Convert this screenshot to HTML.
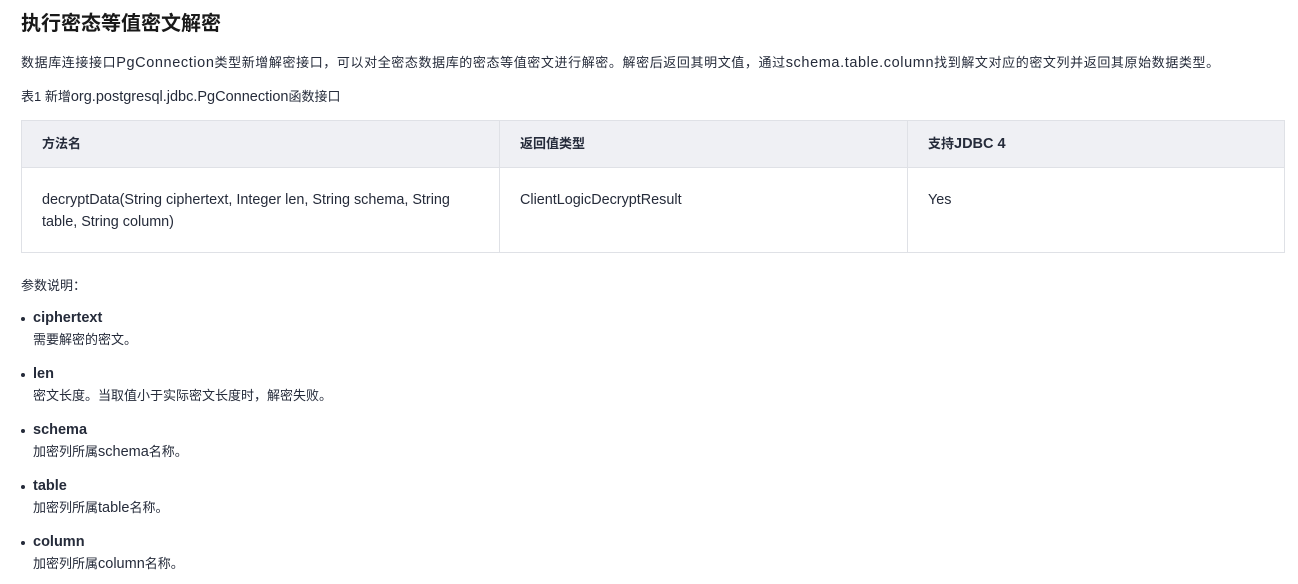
<!DOCTYPE html>
<html><head><meta charset="utf-8"><style>
body{margin:0;background:#fff;font-family:"Liberation Sans","Noto Sans CJK SC",sans-serif;color:#252b3a;font-size:13px;width:1298px;height:584px;overflow:hidden;position:relative}
.a{position:absolute;white-space:nowrap;line-height:22px}
.l{font-size:14.5px}
.p{letter-spacing:0.6px}
h1{position:absolute;left:21px;top:10px;margin:0;font-size:20px;line-height:28px;font-weight:bold;color:#191919}
table{position:absolute;left:21px;top:120px;border-collapse:collapse;width:1264px}
td,th{border:1px solid #dfe1e6;text-align:left;vertical-align:top;padding:0 20px;font-size:13px;line-height:22px}
th{background:#eff0f4;height:46px;vertical-align:middle;font-weight:bold}
td{padding-top:21px;padding-bottom:17px;height:46px;font-size:14.4px}
.b{font-weight:bold}
.dot{position:absolute;left:21px;width:4px;height:4px;border-radius:50%;background:#252b3a}
</style></head><body>
<h1>执行密态等值密文解密</h1>
<div class="a p" style="left:21px;top:52px">数据库连接接口<span class="l">PgConnection</span>类型新增解密接口，可以对全密态数据库的密态等值密文进行解密。解密后返回其明文值，通过<span class="l">schema.table.column</span>找到解文对应的密文列并返回其原始数据类型。</div>
<div class="a" style="left:21px;top:86px">表1 新增<span class="l">org.postgresql.jdbc.PgConnection</span>函数接口</div>
<table>
<tr><th style="width:437px">方法名</th><th style="width:367px">返回值类型</th><th>支持<span class="l">JDBC 4</span></th></tr>
<tr><td>decryptData(String ciphertext, Integer len, String schema, String<br>table, String column)</td><td>ClientLogicDecryptResult</td><td>Yes</td></tr>
</table>
<div class="a" style="left:21px;top:275px">参数说明：</div>
<div class="dot" style="top:317px"></div><div class="a b l" style="left:33px;top:307px">ciphertext</div><div class="a" style="left:33px;top:329px">需要解密的密文。</div>
<div class="dot" style="top:373px"></div><div class="a b l" style="left:33px;top:363px">len</div><div class="a" style="left:33px;top:385px">密文长度。当取值小于实际密文长度时，解密失败。</div>
<div class="dot" style="top:429px"></div><div class="a b l" style="left:33px;top:419px">schema</div><div class="a" style="left:33px;top:441px">加密列所属<span class="l">schema</span>名称。</div>
<div class="dot" style="top:485px"></div><div class="a b l" style="left:33px;top:475px">table</div><div class="a" style="left:33px;top:497px">加密列所属<span class="l">table</span>名称。</div>
<div class="dot" style="top:541px"></div><div class="a b l" style="left:33px;top:531px">column</div><div class="a" style="left:33px;top:553px">加密列所属<span class="l">column</span>名称。</div>
</body></html>
